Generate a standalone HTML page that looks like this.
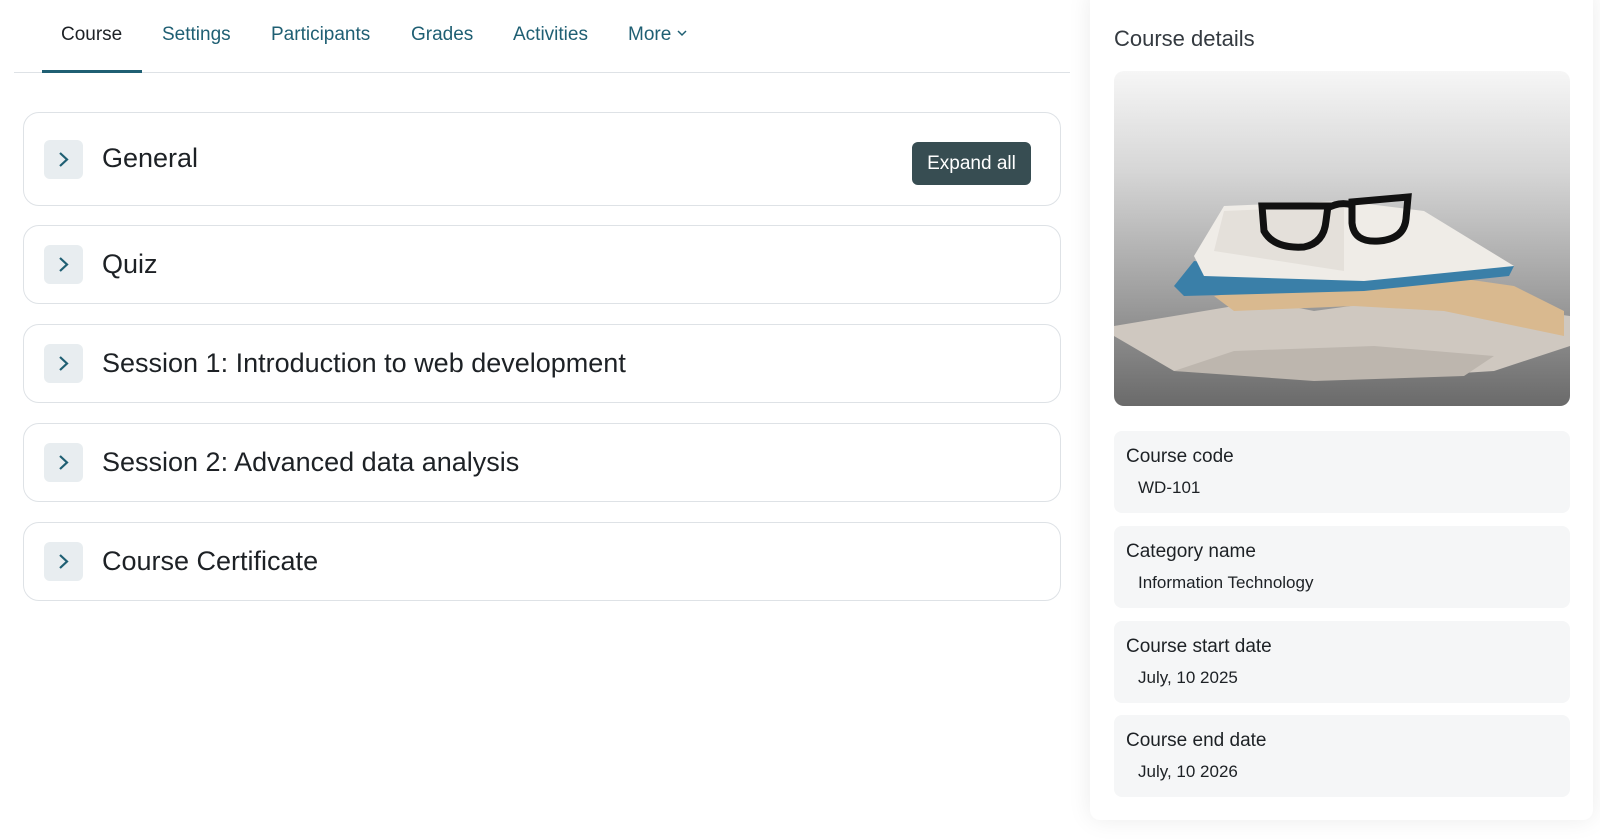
<!DOCTYPE html>
<html><head><style>
*{box-sizing:border-box;margin:0;padding:0}
body{width:1600px;height:840px;background:#fff;font-family:"Liberation Sans",sans-serif;position:relative;overflow:hidden}
.nav a{position:absolute;top:24px;font-size:19px;color:#1f5f73;text-decoration:none;line-height:22px}
.navline{position:absolute;left:14px;top:72px;width:1056px;height:1px;background:#dee2e6}
.under{position:absolute;left:42px;top:70px;width:100px;height:3px;background:#1f5f73}
.card{position:absolute;left:23px;width:1038px;border:1px solid #dee2e6;border-radius:16px;background:#fff}
.chev{position:absolute;left:20px;width:39px;height:39px;background:#e8edf0;border-radius:6px}
.chev svg{position:absolute;left:12px;top:11px}
.title{position:absolute;left:78px;font-size:27px;color:#1d2125;line-height:32px}
.btn{position:absolute;left:912px;top:142px;width:119px;height:43px;background:#374d52;border-radius:6px;color:#fff;font-size:19px;line-height:43px;text-align:center}
.panel{position:absolute;left:1090px;top:-10px;width:503px;height:830px;background:#fff;border-radius:10px;box-shadow:0 0 24px rgba(0,0,0,.08)}
.ph{position:absolute;left:1114px;top:26px;font-size:22px;color:#343a40}
.img{position:absolute;left:1114px;top:71px;width:456px;height:335px;border-radius:10px;overflow:hidden;background:linear-gradient(#f6f6f6 0%,#d6d6d6 30%,#9a9a9a 70%,#6a6a6a 100%)}
.info{position:absolute;left:1114px;width:456px;height:82px;background:#f5f6f7;border-radius:8px}
.info .l{position:absolute;left:12px;top:15px;font-size:19px;color:#1d2125}
.info .v{position:absolute;left:24px;top:47px;font-size:17px;color:#1d2125}
</style></head><body>
<div class="nav">
<a style="left:61px;color:#1d2125">Course</a>
<a style="left:162px">Settings</a>
<a style="left:271px">Participants</a>
<a style="left:411px">Grades</a>
<a style="left:513px">Activities</a>
<a style="left:628px">More <svg width="10" height="8" viewBox="0 0 10 8" style="vertical-align:3px"><path d="M1 2l4 4 4-4" fill="none" stroke="#1f5f73" stroke-width="1.5"/></svg></a>
</div>
<div class="navline"></div><div class="under"></div>

<div class="card" style="top:112px;height:94px"><div class="chev" style="top:27px"><svg width="15" height="17" viewBox="0 0 15 17"><path d="M4 2l7 6.5L4 15" fill="none" stroke="#1f5f73" stroke-width="2.2"/></svg></div><div class="title" style="top:29px">General</div></div>
<div class="btn">Expand all</div>
<div class="card" style="top:225px;height:79px"><div class="chev" style="top:19px"><svg width="15" height="17" viewBox="0 0 15 17"><path d="M4 2l7 6.5L4 15" fill="none" stroke="#1f5f73" stroke-width="2.2"/></svg></div><div class="title" style="top:22px">Quiz</div></div>
<div class="card" style="top:324px;height:79px"><div class="chev" style="top:19px"><svg width="15" height="17" viewBox="0 0 15 17"><path d="M4 2l7 6.5L4 15" fill="none" stroke="#1f5f73" stroke-width="2.2"/></svg></div><div class="title" style="top:22px">Session 1: Introduction to web development</div></div>
<div class="card" style="top:423px;height:79px"><div class="chev" style="top:19px"><svg width="15" height="17" viewBox="0 0 15 17"><path d="M4 2l7 6.5L4 15" fill="none" stroke="#1f5f73" stroke-width="2.2"/></svg></div><div class="title" style="top:22px">Session 2: Advanced data analysis</div></div>
<div class="card" style="top:522px;height:79px"><div class="chev" style="top:19px"><svg width="15" height="17" viewBox="0 0 15 17"><path d="M4 2l7 6.5L4 15" fill="none" stroke="#1f5f73" stroke-width="2.2"/></svg></div><div class="title" style="top:22px">Course Certificate</div></div>

<div class="panel"></div>
<div class="ph">Course details</div>
<div class="img"><svg width="456" height="335" viewBox="0 0 456 335">
<polygon points="0,255 60,245 150,230 200,240 310,225 456,245 456,275 380,300 300,305 60,300 0,265" fill="#cfc8c0"/>
<polygon points="60,300 120,280 260,275 380,285 350,305 200,310" fill="#bdb6ae"/>
<polygon points="100,225 170,215 240,215 330,205 400,215 450,240 450,265 330,240 240,235 120,240" fill="#d9b98f"/>
<polygon points="60,215 80,190 230,205 400,195 395,205 250,220 70,225" fill="#3a7fa8"/>
<polygon points="80,185 110,135 230,130 310,140 400,195 250,210 90,205" fill="#efece7"/>
<polygon points="100,180 110,140 230,135 230,200" fill="#e4e0da"/>
<g fill="none" stroke="#111" stroke-width="7">
<path d="M148 135 L150 160 Q160 178 190 176 Q210 172 212 150 L214 135 Z"/>
<path d="M238 131 L238 152 Q240 172 265 170 Q290 168 292 148 L294 126 Z"/>
<path d="M212 138 Q225 130 238 134"/>
</g>
</svg></div>
<div class="info" style="top:431px"><div class="l">Course code</div><div class="v">WD-101</div></div>
<div class="info" style="top:526px"><div class="l">Category name</div><div class="v">Information Technology</div></div>
<div class="info" style="top:621px"><div class="l">Course start date</div><div class="v">July, 10 2025</div></div>
<div class="info" style="top:715px"><div class="l">Course end date</div><div class="v">July, 10 2026</div></div>
</body></html>
